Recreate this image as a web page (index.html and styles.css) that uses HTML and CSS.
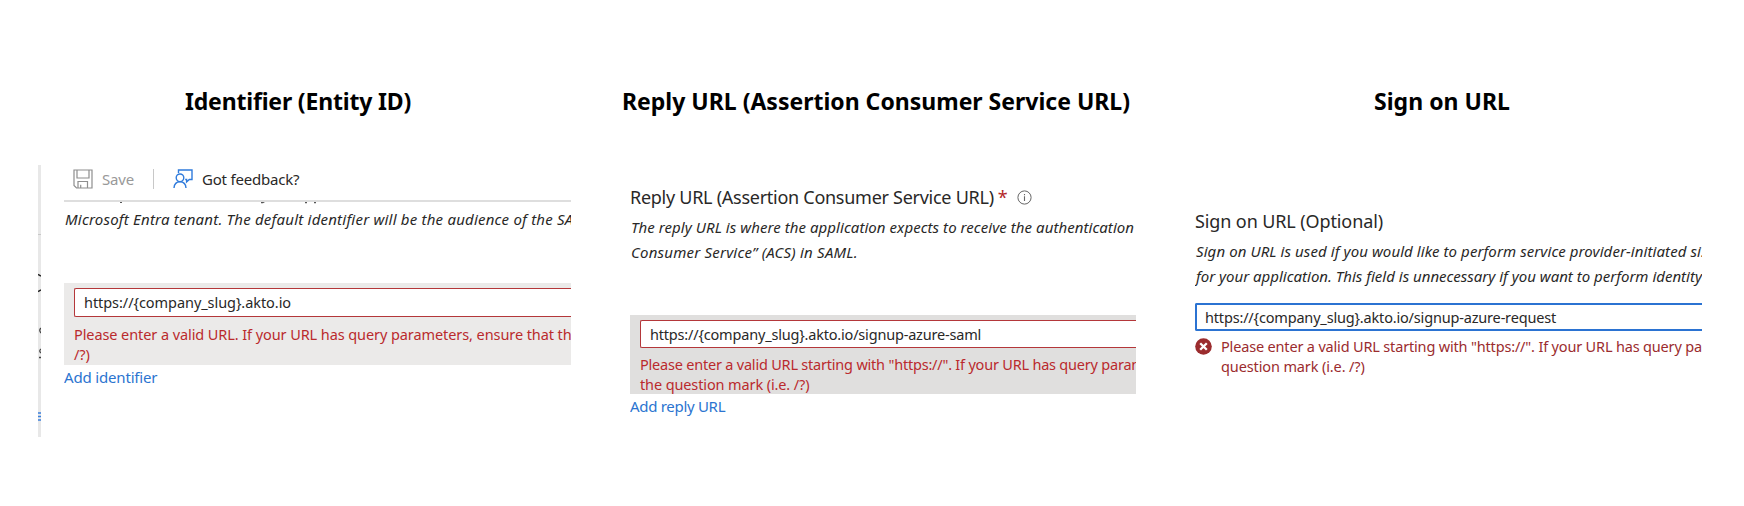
FILE: index.html
```
<!DOCTYPE html>
<html lang="en">
<head>
<meta charset="utf-8">
<title>SAML configuration values</title>
<link rel="stylesheet" href="styles.css">
</head>
<body>
<main class="board">
  <section class="column column-identifier">
    <h2 class="title title-identifier">Identifier (Entity ID)</h2>
    <div class="shot shot-identifier">
      <svg class="edge" width="3" height="272" viewBox="0 0 3 272">
        <rect width="3" height="272" fill="#e8e8e8"/>
        <path d="M0 69.500H3" stroke="#c8c8c8"/>
        <path d="M0 109.500L3 111M0 126.500L3 125" stroke="#222" stroke-width="1.500"/>
        <path d="M3 163Q.5 165 3 168M3 184Q.5 186 3 188M1 192.500H3" fill="none" stroke="#444" stroke-width="1.300"/>
        <path d="M0 248H3M0 251.500H3M0 255H3" stroke="#3b7fdb" stroke-width="1.600"/>
      </svg>
      <div class="pane">
        <div class="toolbar">
          <svg class="icon-save" width="20" height="20" viewBox="0 0 20 20" fill="none" stroke="#8e8e8e" stroke-width="1.200">
            <path d="M1 1H19V19H3.500L1 16.500ZM4 1V9H16V1M5 19V12.500H14.500V19M7.700 19V15.700"/>
          </svg>
          <span class="save">Save</span>
          <span class="divider"></span>
          <svg class="icon-feedback" width="20" height="20" viewBox="0 0 20 20" fill="none" stroke="#2f7bdc" stroke-width="1.400">
            <path d="M5.500 4V1H19V10.500H16.300L13.600 13V10.500H12.200"/>
            <circle cx="7" cy="8.800" r="3.800"/>
            <path d="M1 19C1.300 15.200 3.500 12.800 7 12.800S12.700 15.200 13 19"/>
          </svg>
          <span class="feedback">Got feedback?</span>
        </div>
        <svg class="descenders" width="507" height="3" viewBox="0 0 507 3" fill="#555">
          <path d="M56 0h2v1h-2zM197 0h4l-2 1.200h-2zM241 0h2v1.200h-2zM250 0h2v1.200h-2z"/>
        </svg>
        <p class="note note-tenant">Microsoft Entra tenant. The default identifier will be the audience of the SA</p>
        <div class="entry entry-identifier">
          <div class="input input-identifier">https://{company_slug}.akto.io</div>
          <p class="error error-identifier">Please enter a valid URL. If your URL has query parameters, ensure that th<br>/?)</p>
        </div>
        <a class="add add-identifier">Add identifier</a>
      </div>
    </div>
  </section>

  <section class="column column-reply">
    <h2 class="title title-reply">Reply URL (Assertion Consumer Service URL)</h2>
    <div class="shot shot-reply">
      <div class="label label-reply">
        <span>Reply URL (Assertion Consumer Service URL)</span>
        <span class="star">*</span>
        <svg class="icon-info" width="15" height="15" viewBox="0 0 15 15" fill="none" stroke="#666">
          <circle cx="7.500" cy="7.500" r="6.600"/><path d="M7.500 6.300V11M7.500 4V5.200" stroke-width="1.100"/>
        </svg>
      </div>
      <p class="note note-reply">The reply URL is where the application expects to receive the authentication</p>
      <p class="note note-acs">Consumer Service” (ACS) in SAML.</p>
      <div class="entry entry-reply">
        <div class="input input-reply">https://{company_slug}.akto.io/signup-azure-saml</div>
        <p class="error error-reply">Please enter a valid URL starting with "https://". If your URL has query param<br><span class="wrap">the question mark (i.e. /?)</span></p>
      </div>
      <a class="add add-reply">Add reply URL</a>
    </div>
  </section>

  <section class="column column-sign">
    <h2 class="title title-sign">Sign on URL</h2>
    <div class="shot shot-sign">
      <div class="label label-sign">Sign on URL (Optional)</div>
      <p class="note note-sign">Sign on URL is used if you would like to perform service provider-initiated si.</p>
      <p class="note note-app">for your application. This field is unnecessary if you want to perform identity</p>
      <div class="input input-sign">https://{company_slug}.akto.io/signup-azure-request</div>
      <div class="message">
        <svg class="icon-error" width="17" height="17" viewBox="0 0 17 17">
          <circle cx="8.500" cy="8.500" r="8.300" fill="#9b2c2e"/><path d="M5.200 5.200L11.800 11.800M11.800 5.200L5.200 11.800" stroke="#fff" stroke-width="2.300"/>
        </svg>
        <p class="error error-sign">Please enter a valid URL starting with "https://". If your URL has query pa<br><span class="wrap">question mark (i.e. /?)</span></p>
      </div>
    </div>
  </section>
</main>
</body>
</html>
```
FILE: styles.css
```
* { box-sizing: border-box; }

body {
  margin: 0;
  background: #fff;
  color: #292827;
  font-family: "Noto Sans", "Open Sans", sans-serif;
  font-size: 15px;
}

p, h2 { margin: 0; }

.board {
  display: grid;
  grid-template-columns: 533px 506px 507px;
  column-gap: 59px;
  width: 1744px;
  height: 506px;
  padding-left: 38px;
  overflow: hidden;
}

.column { padding-top: 85px; white-space: nowrap; }

.title {
  height: 33px;
  font-size: 23px;
  font-weight: 700;
  line-height: 32px;
  color: #000;
}
.title-identifier { padding-left: 147px; letter-spacing: -0.18px; }
.title-reply { margin-left: -8px; letter-spacing: 0; }
.title-sign { padding-left: 179px; letter-spacing: 0.03px; }

.shot { overflow: hidden; }
.shot-identifier { display: flex; height: 272px; margin-top: 47px; }
.edge { flex: none; }
.pane { width: 507px; margin-left: 23px; overflow: hidden; }

.toolbar {
  display: flex;
  align-items: center;
  height: 37px;
  padding: 0 0 7px 9px;
  border-bottom: 2px solid #dedede;
}
.save { margin-left: 9px; color: #999; letter-spacing: -0.18px; }
.divider { width: 1px; height: 20px; margin-left: 19px; background: #c8c8c8; }
.icon-feedback { margin-left: 19px; }
.feedback { margin-left: 9px; letter-spacing: -0.2px; }
.descenders { display: block; }

.note {
  height: 25px;
  padding-left: 1px;
  font-style: italic;
  line-height: 25px;
}
.note-tenant { margin-top: 2px; letter-spacing: 0.21px; }
.note-reply { letter-spacing: 0.06px; }
.note-acs { letter-spacing: 0.21px; }
.note-sign { letter-spacing: 0.085px; }

.entry { padding: 5px 0 0 10px; overflow: hidden; }
.entry-identifier { height: 82px; margin-top: 51px; background: #ebeae9; }
.entry-reply { height: 79px; margin-top: 50px; background: #e0dfde; }

.input {
  height: 29px;
  padding-left: 9px;
  border: 1px solid #b4373a;
  border-right: 0;
  border-radius: 2px 0 0 2px;
  background: #fff;
  font-size: 14.5px;
  line-height: 27px;
}
.input-identifier { letter-spacing: -0.06px; }
.input-reply { height: 28px; line-height: 26px; letter-spacing: -0.19px; }
.input-sign {
  height: 28px;
  margin-top: 14px;
  padding-left: 8px;
  border: 2px solid #2b73d2;
  border-right: 0;
  line-height: 24px;
  letter-spacing: -0.175px;
}

.error {
  font-size: 14.5px;
  line-height: 20px;
  color: #ba2a2d;
}
.error-identifier { padding-top: 7px; letter-spacing: -0.085px; }
.error-reply { padding-top: 6px; letter-spacing: -0.21px; }
.error-reply .wrap, .error-sign .wrap { letter-spacing: -0.12px; }
.error-sign { color: #9b2c2e; letter-spacing: -0.17px; }

.add {
  display: block;
  height: 22px;
  line-height: 22px;
  color: #2b74d0;
}
.add-identifier { margin-top: 1px; letter-spacing: -0.17px; }
.add-reply { margin-top: 1px; letter-spacing: -0.3px; }

.label { font-size: 18px; }
.shot-reply { height: 260px; margin-top: 65px; }
.label-reply {
  display: flex;
  align-items: center;
  height: 32px;
  padding-bottom: 4px;
  line-height: 28px;
  letter-spacing: -0.27px;
}
.star { margin-left: 4px; color: #b4272a; }
.icon-info { margin-left: 10px; }

.shot-sign { height: 200px; margin-top: 89px; }
.label-sign { height: 32px; line-height: 28px; letter-spacing: -0.11px; }
.message { display: flex; padding-top: 5px; }
.icon-error { flex: none; margin: 2px 9px 0 0; }
```
